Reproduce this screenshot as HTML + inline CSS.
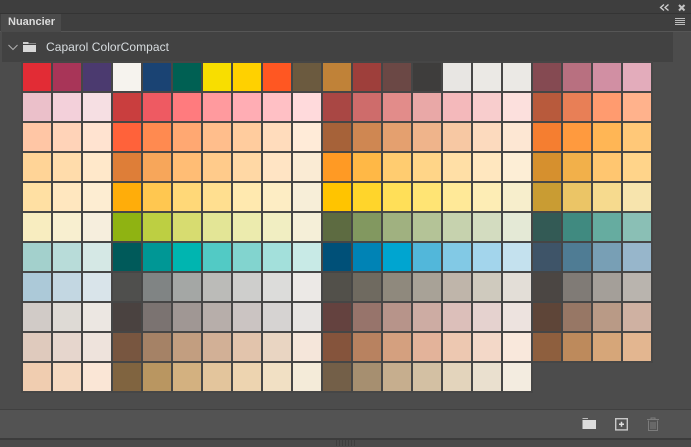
<!DOCTYPE html>
<html lang="fr">
<head>
<meta charset="utf-8">
<title>Nuancier</title>
<style>
html,body{margin:0;padding:0;background:#4c4c4c}
body{width:691px;height:447px;position:relative;overflow:hidden;font-family:"Liberation Sans",sans-serif}
.a{position:absolute}
#g{position:absolute;left:23px;top:63px;width:630px;display:grid;grid-template-columns:repeat(21,28px);grid-auto-rows:28px;gap:2px}
#gbg1{position:absolute;left:21px;top:61px;width:632px;height:302px;background:#464646}
#gbg2{position:absolute;left:21px;top:363px;width:512px;height:30px;background:#464646}
#g i{display:block}
</style>
</head>
<body>
<div class="a" style="left:0;top:0;width:691px;height:13px;background:#3e3e3e"></div>
<div class="a" style="left:0;top:13px;width:691px;height:1px;background:#343434"></div>
<div class="a" style="left:0;top:14px;width:691px;height:17px;background:#3f3f3f"></div>
<div class="a" style="left:0;top:31px;width:691px;height:1px;background:#565656"></div>
<div class="a" style="left:1px;top:14px;width:60px;height:18px;background:#4b4b4b"></div>
<div class="a" style="left:8px;top:16px;font-size:11px;font-weight:700;line-height:13px;color:#dcdcdc">Nuancier</div>
<svg class="a" style="left:658px;top:3px" width="30" height="10" viewBox="0 0 30 10"><path d="M6 1.5L2.5 4.5 6 7.5M10.5 1.5L7 4.5 10.5 7.5" fill="none" stroke="#cfcfcf" stroke-width="1.3"/><path d="M21 2L26.5 7.5M26.5 2L21 7.5" fill="none" stroke="#c4c4c4" stroke-width="2"/></svg>
<div class="a" style="left:675px;top:18px;width:10px;height:1px;background:#bdbdbd;box-shadow:0 2px #bdbdbd,0 4px #bdbdbd,0 6px #bdbdbd"></div>

<div class="a" style="left:0;top:32px;width:691px;height:378px;background:#4c4c4c"></div>
<div class="a" style="left:2px;top:32px;width:671px;height:30px;background:#424242"></div>
<svg class="a" style="left:7px;top:43px" width="12" height="9" viewBox="0 0 12 9"><path d="M1.5 2L6 6.5 10.5 2" fill="none" stroke="#b0b0b0" stroke-width="1"/></svg>
<svg class="a" style="left:22px;top:41px" width="15" height="12" viewBox="0 0 15 12"><path d="M1 1H6.5V2.5H14V3H1Z" fill="#cfcfcf"/><path d="M1 4H14V11H1Z" fill="#d8d8d8"/></svg>
<div class="a" style="left:46px;top:40px;font-size:12px;line-height:15px;color:#d8dde0;letter-spacing:.05px;white-space:nowrap">Caparol ColorCompact</div>

<div id="gbg1"></div><div id="gbg2"></div>
<div id="g">
<i style="background:#e22c35"></i><i style="background:#a83558"></i><i style="background:#4b3a6f"></i><i style="background:#f6f3ee"></i><i style="background:#1a4373"></i><i style="background:#006053"></i><i style="background:#f8de00"></i><i style="background:#ffd100"></i><i style="background:#ff5722"></i><i style="background:#6b5a3f"></i><i style="background:#c08238"></i><i style="background:#9e3f3b"></i><i style="background:#6b4845"></i><i style="background:#3e3d3c"></i><i style="background:#e8e6e3"></i><i style="background:#ebe9e5"></i><i style="background:#ebe9e5"></i><i style="background:#854a52"></i><i style="background:#b87080"></i><i style="background:#d18fa3"></i><i style="background:#e3acbb"></i>
<i style="background:#ebc0ca"></i><i style="background:#f3d0da"></i><i style="background:#f6dfe3"></i><i style="background:#c93e3e"></i><i style="background:#ee5a62"></i><i style="background:#ff7b7e"></i><i style="background:#ff9a9e"></i><i style="background:#ffadb4"></i><i style="background:#ffc0c5"></i><i style="background:#ffdadc"></i><i style="background:#a94744"></i><i style="background:#ce6c6b"></i><i style="background:#e28c8a"></i><i style="background:#e9a8a7"></i><i style="background:#f4b9bb"></i><i style="background:#f8cdcd"></i><i style="background:#fce0dd"></i><i style="background:#b85a3c"></i><i style="background:#e87f56"></i><i style="background:#ff9b6f"></i><i style="background:#ffb28c"></i>
<i style="background:#ffc6a5"></i><i style="background:#ffd3b8"></i><i style="background:#ffe3d0"></i><i style="background:#ff623a"></i><i style="background:#ff8a50"></i><i style="background:#ffa872"></i><i style="background:#ffbe8c"></i><i style="background:#ffcc9e"></i><i style="background:#ffdcbc"></i><i style="background:#ffebd8"></i><i style="background:#a66239"></i><i style="background:#cf8752"></i><i style="background:#e4a06f"></i><i style="background:#efb48b"></i><i style="background:#f7c8a3"></i><i style="background:#fcdabe"></i><i style="background:#fde7d3"></i><i style="background:#f57e30"></i><i style="background:#ff9a3e"></i><i style="background:#ffb655"></i><i style="background:#ffc878"></i>
<i style="background:#ffd497"></i><i style="background:#ffdcab"></i><i style="background:#ffe8ca"></i><i style="background:#de7e38"></i><i style="background:#f7a65a"></i><i style="background:#ffbd75"></i><i style="background:#ffcb8b"></i><i style="background:#ffd8a5"></i><i style="background:#ffe4c4"></i><i style="background:#faebd4"></i><i style="background:#ff9a24"></i><i style="background:#ffb846"></i><i style="background:#ffcc70"></i><i style="background:#ffd588"></i><i style="background:#ffdfa6"></i><i style="background:#ffe7bf"></i><i style="background:#fdeed6"></i><i style="background:#d6902e"></i><i style="background:#f2b04a"></i><i style="background:#ffc670"></i><i style="background:#ffd48a"></i>
<i style="background:#ffe0a3"></i><i style="background:#ffe7bf"></i><i style="background:#fdedd2"></i><i style="background:#ffad0a"></i><i style="background:#ffc750"></i><i style="background:#ffd878"></i><i style="background:#ffdf90"></i><i style="background:#ffe9af"></i><i style="background:#fdedc4"></i><i style="background:#f7eed8"></i><i style="background:#ffc400"></i><i style="background:#ffd52b"></i><i style="background:#ffdf58"></i><i style="background:#ffe474"></i><i style="background:#ffe998"></i><i style="background:#fdedb5"></i><i style="background:#f7eecc"></i><i style="background:#c99c33"></i><i style="background:#ebc566"></i><i style="background:#f6da8e"></i><i style="background:#f7e4ad"></i>
<i style="background:#f8edc0"></i><i style="background:#f8efd0"></i><i style="background:#f6eedd"></i><i style="background:#8fb312"></i><i style="background:#bdcf42"></i><i style="background:#d7dc70"></i><i style="background:#e3e596"></i><i style="background:#ecebae"></i><i style="background:#f1eec2"></i><i style="background:#f5efd8"></i><i style="background:#5d6b41"></i><i style="background:#829860"></i><i style="background:#a0b180"></i><i style="background:#b4c397"></i><i style="background:#c6d2ae"></i><i style="background:#d3dcc0"></i><i style="background:#e4e9d6"></i><i style="background:#335a55"></i><i style="background:#408a80"></i><i style="background:#66aca0"></i><i style="background:#8abfb5"></i>
<i style="background:#a3d0cc"></i><i style="background:#b8dcd9"></i><i style="background:#d5e8e5"></i><i style="background:#005a5a"></i><i style="background:#009795"></i><i style="background:#00b5b0"></i><i style="background:#52cac5"></i><i style="background:#82d4cf"></i><i style="background:#a3e0db"></i><i style="background:#c8eae6"></i><i style="background:#005078"></i><i style="background:#0083b5"></i><i style="background:#00a5d0"></i><i style="background:#52b7da"></i><i style="background:#82c9e5"></i><i style="background:#a3d5ec"></i><i style="background:#c4e1ee"></i><i style="background:#3e5468"></i><i style="background:#4f7c94"></i><i style="background:#789fb5"></i><i style="background:#97b6cb"></i>
<i style="background:#acc9d8"></i><i style="background:#c3d7e2"></i><i style="background:#d9e4ea"></i><i style="background:#4f4f4d"></i><i style="background:#808484"></i><i style="background:#a4a7a5"></i><i style="background:#bbbbb8"></i><i style="background:#cececc"></i><i style="background:#dcdcda"></i><i style="background:#ece9e6"></i><i style="background:#52504a"></i><i style="background:#6f6a60"></i><i style="background:#8f897d"></i><i style="background:#a8a297"></i><i style="background:#bfb5aa"></i><i style="background:#cfcabe"></i><i style="background:#e3ded7"></i><i style="background:#4b4643"></i><i style="background:#807b76"></i><i style="background:#a49f99"></i><i style="background:#b9b4ae"></i>
<i style="background:#d1cbc7"></i><i style="background:#dedad5"></i><i style="background:#ece7e2"></i><i style="background:#4a4240"></i><i style="background:#7b7371"></i><i style="background:#a09794"></i><i style="background:#b7aeaa"></i><i style="background:#cbc4c2"></i><i style="background:#d6d3d2"></i><i style="background:#e7e4e2"></i><i style="background:#64423f"></i><i style="background:#97746b"></i><i style="background:#b7948a"></i><i style="background:#cdaca3"></i><i style="background:#dcbfba"></i><i style="background:#e5d2cf"></i><i style="background:#ede3df"></i><i style="background:#5e4538"></i><i style="background:#977765"></i><i style="background:#b99a86"></i><i style="background:#cfb1a2"></i>
<i style="background:#dfcabd"></i><i style="background:#e6d6cd"></i><i style="background:#eee3dc"></i><i style="background:#785640"></i><i style="background:#a58266"></i><i style="background:#c29e80"></i><i style="background:#d2b096"></i><i style="background:#e2c4ac"></i><i style="background:#e9d5c2"></i><i style="background:#f5e6da"></i><i style="background:#85543c"></i><i style="background:#b88260"></i><i style="background:#d4a07f"></i><i style="background:#e3b39a"></i><i style="background:#edc8b1"></i><i style="background:#f3d8c8"></i><i style="background:#f9e8dc"></i><i style="background:#8e5f3e"></i><i style="background:#bd8a5c"></i><i style="background:#d6a679"></i><i style="background:#e3b690"></i>
<i style="background:#f0cdb0"></i><i style="background:#f5d9c0"></i><i style="background:#fae6d6"></i><i style="background:#806440"></i><i style="background:#b99661"></i><i style="background:#d3b180"></i><i style="background:#e3c59c"></i><i style="background:#edd4b0"></i><i style="background:#f1e0c4"></i><i style="background:#f4ebd9"></i><i style="background:#735f48"></i><i style="background:#a68f70"></i><i style="background:#c6ae8e"></i><i style="background:#d3c0a3"></i><i style="background:#e3d4bc"></i><i style="background:#eae0cf"></i><i style="background:#f3ece0"></i>
</div>

<div class="a" style="left:0;top:409px;width:691px;height:1px;background:#404040"></div>
<div class="a" style="left:0;top:410px;width:691px;height:28px;background:#535353"></div>
<div class="a" style="left:0;top:438px;width:691px;height:2px;background:#3c3c3c"></div>
<div class="a" style="left:0;top:440px;width:691px;height:7px;background:#4a4a4a"></div>
<div class="a" style="left:336px;top:440px;width:19px;height:6px;background:repeating-linear-gradient(90deg,#3e3e3e 0 1px,#4a4a4a 1px 3px)"></div>

<svg class="a" style="left:581px;top:417px" width="16" height="13" viewBox="0 0 16 13"><path d="M1.5 1H7V2H1.5Z" fill="#bcbcbc"/><path d="M1.5 3H15V12H1.5Z" fill="#dcdcdc"/></svg>
<svg class="a" style="left:614px;top:417px" width="15" height="14" viewBox="0 0 15 14"><rect x="1.7" y="1.7" width="11.6" height="11.2" fill="none" stroke="#c8c8c8" stroke-width="1.4"/><path d="M5 7.3H10M7.5 4.8V9.8" stroke="#e0e0e0" stroke-width="1.5"/></svg>
<svg class="a" style="left:646px;top:417px" width="15" height="15" viewBox="0 0 15 15"><path d="M1 2.5H13M5 2.5V1H9V2.5" fill="none" stroke="#7c7c7c"/><path d="M2.5 3.5V13.5H11.5V3.5M5 5V12M7 5V12M9 5V12" fill="none" stroke="#7c7c7c"/></svg>
</body>
</html>
